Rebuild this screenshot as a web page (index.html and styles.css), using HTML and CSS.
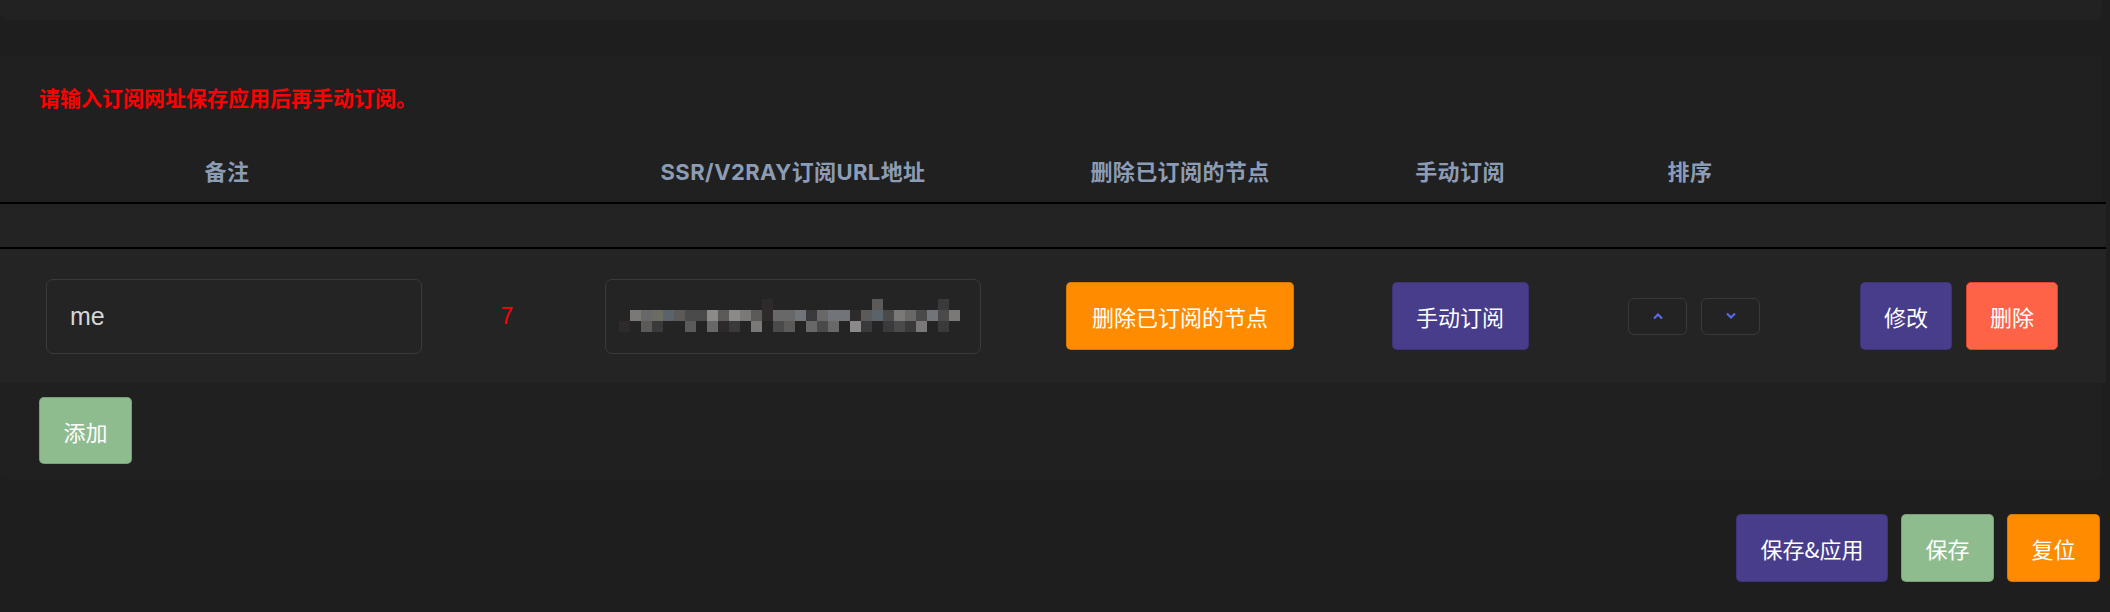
FILE: index.html
```html
<!DOCTYPE html>
<html lang="zh-CN">
<head>
<meta charset="utf-8">
<title>订阅</title>
<link rel="stylesheet" href="styles.css">
</head>
<body>
<div class="prev"></div>
<div class="card">
  <p class="notice">请输入订阅网址保存应用后再手动订阅。</p>
  <div class="grid thead">
    <div class="th th-remark">备注</div>
    <div class="th"></div>
    <div class="th th-url">SSR/V2RAY订阅URL地址</div>
    <div class="th">删除已订阅的节点</div>
    <div class="th">手动订阅</div>
    <div class="th">排序</div>
    <div class="th"></div>
  </div>
  <div class="spacer"></div>
  <div class="grid trow">
    <div class="td"><div class="field">me</div></div>
    <div class="td"><span class="num">7</span></div>
    <div class="td">
      <div class="field field-url">
        <div class="mosaic">
          <i></i><i></i><i></i><i></i><i></i><i></i><i></i><i></i><i></i><i></i><i></i><i></i><i></i><i class="k1"></i><i></i><i></i><i></i><i></i><i></i><i></i><i></i><i></i><i></i><i class="k4"></i><i></i><i></i><i></i><i></i><i></i><i class="k2"></i><i></i>
          <i></i><i class="k7"></i><i class="k5"></i><i class="ko"></i><i class="kb"></i><i class="k4"></i><i class="k3"></i><i class="k3"></i><i class="k8"></i><i class="k4"></i><i class="k8"></i><i class="k7"></i><i class="k4"></i><i class="k1"></i><i class="k5"></i><i class="k5"></i><i class="k6"></i><i class="k2"></i><i class="k5"></i><i class="k6"></i><i class="k6"></i><i class="k1"></i><i class="k4"></i><i class="kb"></i><i class="k3"></i><i class="k7"></i><i class="k5"></i><i class="k3"></i><i class="k6"></i><i class="k3"></i><i class="k7"></i>
          <i class="k1"></i><i></i><i class="k4"></i><i class="k2"></i><i></i><i></i><i class="k4"></i><i></i><i class="k5"></i><i class="k1"></i><i class="k2"></i><i></i><i class="k7"></i><i></i><i class="k3"></i><i class="k4"></i><i></i><i class="k5"></i><i class="k3"></i><i class="k5"></i><i></i><i class="k8"></i><i class="k2"></i><i></i><i class="k2"></i><i class="k3"></i><i class="k2"></i><i class="k7"></i><i></i><i class="k2"></i><i></i>
        </div>
      </div>
    </div>
    <div class="td"><button class="btn orange w-nodes">删除已订阅的节点</button></div>
    <div class="td"><button class="btn purple w-sub">手动订阅</button></div>
    <div class="td sorts">
      <button class="sort" aria-label="上移"><svg width="12" height="8" viewBox="0 0 12 8"><polyline points="2,6.5 6,2.5 10,6.5" fill="none" stroke="#5b6cf2" stroke-width="2"/></svg></button>
      <button class="sort" aria-label="下移"><svg width="12" height="8" viewBox="0 0 12 8"><polyline points="2,1.5 6,5.5 10,1.5" fill="none" stroke="#5b6cf2" stroke-width="2"/></svg></button>
    </div>
    <div class="td ops">
      <button class="btn purple w-edit">修改</button>
      <button class="btn tomato w-del">删除</button>
    </div>
  </div>
  <div class="addrow"><button class="btn green w-add">添加</button></div>
</div>
<div class="actions">
  <button class="btn purple w-apply">保存&amp;应用</button>
  <button class="btn green w-save">保存</button>
  <button class="btn orange w-reset">复位</button>
</div>
</body>
</html>
```
FILE: styles.css
```css
* { box-sizing: border-box; }
html, body { margin: 0; padding: 0; }
body {
  background: #1e1e1e;
  width: 2110px;
  height: 612px;
  overflow: hidden;
  font-family: "Noto Sans CJK SC", "Liberation Sans", sans-serif;
}
.prev {
  height: 20px;
  width: 2102px;
  background: #222222;
  border-radius: 0 0 8px 8px;
}
.card {
  margin-top: 35px;
  width: 2102px;
  height: 424px;
  background: #202020;
  border-radius: 6px;
  padding-top: 28px;
}
.notice {
  margin: 0 0 0 39px;
  font-size: 21px;
  line-height: 28px;
  font-weight: 700;
  color: #ff0000;
}
.grid {
  display: grid;
  grid-template-columns: 468px 78px 494px 280px 280px 180px 326px;
  width: 2106px;
}
.thead {
  height: 93px;
  padding-top: 47px;
  border-bottom: 2px solid #000;
}
.th {
  text-align: center;
  font-family: "Inter", "Noto Sans CJK SC", sans-serif;
  font-weight: 700;
  font-size: 22px;
  line-height: 28px;
  letter-spacing: 0.4px;
  color: #8d9cb5;
  white-space: nowrap;
}
.th-remark { padding-right: 14px; }
.th-url { padding-right: 0; }
.spacer {
  width: 2106px;
  height: 45px;
  background: #232323;
  border-bottom: 2px solid #000;
}
.trow {
  height: 134px;
  background: #242424;
  align-items: center;
}
.td {
  display: flex;
  justify-content: center;
  align-items: center;
}
.field {
  width: 376px;
  height: 75px;
  border: 1px solid #3a3a3a;
  border-radius: 7px;
  background: #242424;
  display: flex;
  align-items: center;
  padding-left: 23px;
  font-family: "Liberation Sans", Arial, sans-serif;
  font-size: 25px;
  color: #d6d6d6;
}
.field-url { padding-left: 13px; overflow: hidden; }
.mosaic {
  display: grid;
  grid-template-columns: repeat(31, 11px);
  grid-auto-rows: 11px;
  margin-top: -1px;
}
.mosaic i { display: block; }
.k1 { background: #2e2a2b; }
.k2 { background: #3a3a3d; }
.k3 { background: #4b4a4b; }
.k4 { background: #5b5a59; }
.k5 { background: #686868; }
.k6 { background: #717479; }
.k7 { background: #7b7977; }
.k8 { background: #8c8a88; }
.kb { background: #5a626a; }
.ko { background: #6c6c62; }
.num {
  font-family: "Liberation Sans", Arial, sans-serif;
  font-size: 23px;
  color: #ff0000;
}
.btn {
  display: inline-flex;
  align-items: center;
  justify-content: center;
  height: 68px;
  padding: 0;
  margin: 0;
  border: 1px solid rgba(0, 0, 0, 0.15);
  border-radius: 5px;
  color: #ffffff;
  font-family: "Noto Sans CJK SC", sans-serif;
  font-size: 22px;
  white-space: nowrap;
}
.orange { background: #ff8c00; }
.purple { background: #483d8b; }
.green { background: #8fbc8f; }
.tomato { background: #ff6347; border-color: #e0442c; }
.w-nodes { width: 228px; }
.w-sub { width: 137px; }
.w-edit { width: 92px; }
.w-del { width: 92px; }
.w-add { width: 93px; height: 67px; }
.w-apply { width: 152px; }
.w-save { width: 93px; }
.w-reset { width: 93px; }
.sorts { gap: 14px; padding-left: 8px; }
.sort {
  width: 59px;
  height: 37px;
  padding: 0;
  margin: 0;
  background: #232323;
  border: 1px solid #393939;
  border-radius: 6px;
  display: flex;
  align-items: center;
  justify-content: center;
}
.ops {
  justify-content: flex-start;
  padding-left: 80px;
  gap: 14px;
}
.addrow { padding: 14px 0 0 39px; }
.actions {
  display: flex;
  justify-content: flex-end;
  gap: 13px;
  margin-top: 35px;
  width: 2100px;
}
```
